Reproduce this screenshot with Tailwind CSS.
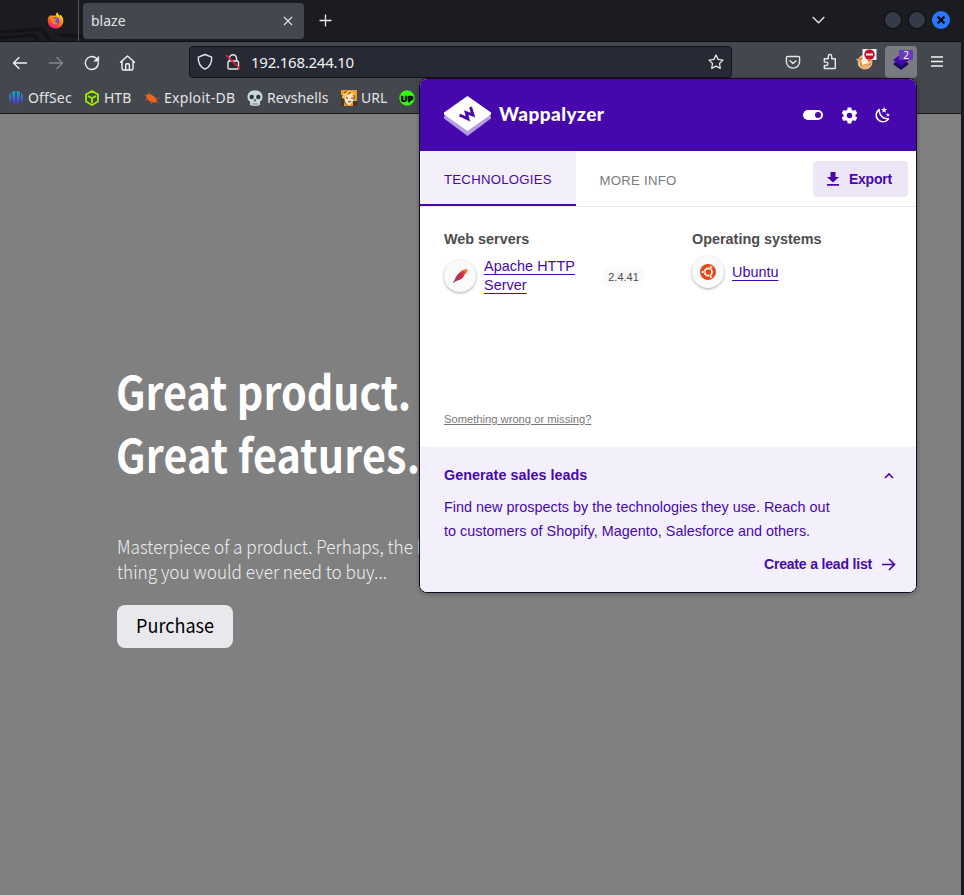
<!DOCTYPE html>
<html lang="en"><head><meta charset="utf-8"><title>blaze</title>
<script src="https://cdn.jsdelivr.net/npm/@tailwindcss/browser@4"></script></head>
<body class="relative flex h-[895px] w-[964px] overflow-hidden bg-[#17191f] font-['Noto_Sans',sans-serif]">
<div class="flex w-[961px] shrink-0 flex-col">
 <header class="relative flex h-[42px] shrink-0 items-center border-b border-[#0c0d10] bg-[#1b1c21] text-[#e3e4e6]">
  <svg class="absolute left-0 top-0" width="120" height="41" fill="none" stroke="#121317" stroke-width="3"><path d="M0 32 42 29l8 12M0 38l34-3 5 6M60 35l50 3"/></svg>
  <div class="relative flex h-full w-[79px] items-center justify-end border-r border-[#55565b] pr-[14px]">
   <svg width="17" height="17" viewBox="0 0 17 17"><defs><linearGradient id="fx" x1=".8" y1="0" x2=".3" y2="1"><stop offset="0" stop-color="#fff14a"/><stop offset=".4" stop-color="#ff980e"/><stop offset=".8" stop-color="#ff3647"/><stop offset="1" stop-color="#e31587"/></linearGradient></defs><path d="M.7 8.5C.7 6.6 1.6 4.7 2.5 3.4l.4 1.2L4 2.5l.7 1.6c1.4-.8 3.3-.6 4.3-.4C8.800 2 9.500.8 10.600.2c.1 1.600 1.200 2.500 2.400 3.600.3-.3.3-.8.3-1.200 2.400 2 3.300 4.300 3 7.100-.4 4-3.600 6.900-7.700 6.900C4 16.600.7 13.100.7 8.500z" fill="url(#fx)"/><circle cx="8.7" cy="9" r="3.7" fill="#7246d8"/><path d="M4.200 7c1.100-1.200 3-1 4.200 0 .8.100 1.500.2 1.800.5-.3.8-2 .9-2.400 1.600-.1 1.300 1.900 1.800 3 .8-.3 2-2.800 3-4.700 1.800C4.300 10.700 3.700 8.600 4.200 7z" fill="#ff8428"/></svg>
  </div>
  <div class="relative ml-1 flex h-9 w-[221px] items-center justify-between rounded bg-[#45474e] pl-2 pr-[11px] text-[14px]"><span>blaze</span>
   <svg width="10" height="10" fill="none" stroke="#e3e4e6" stroke-width="1.1"><path d="m1 1 8 8M9 1 1 9"/></svg></div>
  <svg class="ml-[15px]" width="13" height="13" fill="none" stroke="#eee" stroke-width="1.3"><path d="M6.500.5v12M.5 6.500h12"/></svg>
  <svg class="ml-[480px] -mt-px" width="13" height="8" fill="none" stroke="#e3e4e6" stroke-width="1.4"><path d="m.7 1 5.800 5.800L12.300 1"/></svg>
  <div class="ml-[59px] flex gap-[6px] -mt-px">
   <i class="size-[18px] rounded-full border border-[#0b0c0f] bg-[#353b46]"></i><i class="size-[18px] rounded-full border border-[#0b0c0f] bg-[#353b46]"></i>
   <svg width="18" height="18" viewBox="0 0 18 18"><circle cx="9" cy="9" r="9" fill="#2777ff"/><path d="m5.600 5.600 6.800 6.800m0-6.800-6.800 6.800" stroke="#0c1018" stroke-width="2.2"/></svg>
  </div>
 </header>
 <div class="flex h-[41px] shrink-0 items-center bg-[#45474e] text-[#f2f2f4]">
  <svg class="ml-3" width="125" height="20" viewBox="0 0 125 20" fill="none" stroke="#f2f2f4" stroke-width="1.4" stroke-linecap="round" stroke-linejoin="round"><path d="M1.500 10h13M7 4.500 1.500 10 7 15.500"/><path stroke="#85868b" d="M37.500 10h13M45 4.500l5.500 5.500-5.500 5.500"/><path d="M86.300 9.500a6.500 6.500 0 1 1-2-4.200l1.500 1.500"/><path d="M86.800 3.500V8.300H82z" fill="#f2f2f4" stroke-width=".5"/><path d="m108.500 9.300 7-6.300 7 6.300M110 8.200v7.300c0 .9.500 1.500 1.500 1.500h8c1 0 1.500-.6 1.500-1.500V8.200M113.700 16.800V12c0-.8.500-1.200 1.200-1.200h1.300c.7 0 1.200.4 1.200 1.200v4.800"/></svg>
  <div class="ml-[52px] flex h-8 w-[543px] shrink-0 -translate-y-px items-center rounded border border-[#121318] bg-[#272934]">
   <svg class="ml-[7px]" width="44" height="18" viewBox="0 0 44 18" fill="none" stroke="#e7e7e9" stroke-width="1.4"><path d="m8 1.500 6.700 2.700c.2 5.300-1.500 9.500-6.700 12C2.800 13.700 1.100 9.500 1.300 4.200z" stroke-linejoin="round"/><path d="M32.500 8V5.200a3.500 3.500 0 0 1 7 0V8"/><rect x="31" y="8" width="10.500" height="8" rx="1.300"/><path d="m29 2 14 14" stroke="#e8193f" stroke-width="1.600"/></svg>
   <span class="ml-[10px] pt-[2px] text-[15px] tracking-[-.25px]">192.168.244.10</span>
   <svg class="ml-auto mr-[7px]" width="16" height="16" viewBox="0 0 16 16" fill="none" stroke="#e7e7e9" stroke-width="1.300" stroke-linejoin="round"><path d="m8 1 2.100 4.400 4.900.7-3.500 3.400.8 4.900L8 12.100l-4.300 2.300.8-4.900L1 6.100l4.900-.7z"/></svg>
  </div>
  <svg class="ml-[53px] shrink-0 -translate-y-px" width="16" height="16" viewBox="0 0 16 16" fill="none" stroke="#e7e7e9" stroke-width="1.400" stroke-linecap="round" stroke-linejoin="round"><path d="M2.700 2.500h10.600c.8 0 1.300.5 1.300 1.300V7.500a6.600 6.600 0 0 1-13.200 0V3.800c0-.8.500-1.300 1.300-1.300zM5 6.700l3 2.900 3-2.900"/></svg>
  <svg class="ml-[21px] shrink-0 -translate-y-px" width="16" height="17" viewBox="0 0 16 17" fill="none" stroke="#e7e7e9" stroke-width="1.400" stroke-linejoin="round"><path d="M2.300 5.800h4V3.200a1.700 1.700 0 0 1 3.400 0v2.600h3.600V15.500H2.300v-3h2a1.700 1.700 0 0 0 0-3.400h-2z"/></svg>
  <svg class="ml-[16px] mb-[5px] shrink-0" width="23" height="22" viewBox="0 0 23 22"><circle cx="11" cy="13" r="7.500" fill="#edb27c"/><path d="M3 11c5-3 11-3 15-1l-2 6-8 2z" fill="#e97818"/><path d="m7 11 6-1 2 4-7 2z" fill="#fff0d5"/><path d="M2.500 10 6 12l-1 5M8 17l5-1 4-4" fill="none" stroke="#c8d1cc" stroke-width="1.200"/><rect x="8.500" width="14" height="11" fill="#fff"/><circle cx="15.500" cy="5.500" r="5.200" fill="#c40f2b"/><path d="M12 4.500h7v2h-7z" fill="#fff"/></svg>
  <div class="ml-[8px] grid h-8 w-8 shrink-0 -translate-y-px place-items-center rounded bg-[#7a7b80]"><svg width="32" height="32" viewBox="0 0 32 32"><path d="m8 18 8-6 8 6-8 6z" fill="#190a5c"/><path d="m8 14 8-6 8 6-8 6z" fill="#4608ad"/><rect x="14" y="4" width="14" height="10" rx="1" fill="#6938bb"/><text x="21" y="12.500" fill="#fff" font-size="10" text-anchor="middle">2</text></svg></div>
  <svg class="ml-[14px] -translate-y-px" width="12" height="11" stroke="#f2f2f4" stroke-width="1.300"><path d="M0 1h12M0 5.500h12M0 10h12"/></svg>
 </div>
 <nav class="flex h-[31px] shrink-0 items-center border-b border-[#17181b] bg-[#45474e] pb-px text-[14px] whitespace-nowrap text-[#e3e4e6]">
  <div class="flex w-[76px] items-center gap-1 pl-2 tracking-[.15px]"><svg width="16" height="16" viewBox="0 0 16 16"><defs><linearGradient id="of" x2="0" y2="1"><stop stop-color="#0cb5be"/><stop offset="1" stop-color="#6320ed"/></linearGradient></defs><path d="M3.500 2.300C0 5 .3 10 3 13V2.300zM4.200 1.700 7.300 1v14l-1-.3C5 12 4.200 9 4.200 6zM11.800 1.700 8.700 1v14l1-.3C11 12 11.800 9 11.800 6zM12.500 2.300C16 5 15.700 10 13 13V2.300z" fill="url(#of)"/></svg>OffSec</div>
  <div class="flex w-[60px] items-center gap-1 pl-2"><svg width="16" height="16" viewBox="0 0 16 16" fill="none" stroke="#9fef00" stroke-width="1.800" stroke-linejoin="round"><path d="m8 1 6 3.500v7L8 15l-6-3.500v-7zM4 6l4 2.300L12 6M8 8.300V13"/></svg>HTB</div>
  <div class="flex w-[103px] items-center gap-1 pl-2 tracking-[.3px]"><svg width="16" height="16" viewBox="0 0 16 16"><path d="M2.500 4.500c4-.8 7.500 1 9.500 4l1 3.500C9 13 5.500 12 4 9.500 2.300 8.500 2 6.500 2.500 4.500z" fill="#ef651f"/><path d="m5 2 1.500 3M.5 5 4 6M1 10l4-1M7 14l1.500-3M15.500 8l-4 1M12 11l3 2.500" fill="none" stroke="#c95a22" stroke-width=".8"/></svg>Exploit-DB</div>
  <div class="flex w-[94px] items-center gap-1 pl-2 tracking-[.1px]"><svg width="16" height="16" viewBox="0 0 16 16"><path d="M8 .300c5 0 7.500 3 7.500 6.700 0 2-.8 3.700-2.500 4.500V15c-3 1.200-7 1.200-10 0v-3.500C1.300 10.700.500 9 .500 7 .500 3.300 3 .300 8 .300z" fill="#cad6de"/><circle cx="4.700" cy="7" r="2.200" fill="#2a3740"/><circle cx="11.300" cy="7" r="2.200" fill="#2a3740"/><path d="m8 9-1 2h2zM6 13v2m2-2v2m2-2v2" fill="#2a3740" stroke="#5c6a72" stroke-width=".8"/></svg>Revshells</div>
  <div class="flex w-[58px] items-center gap-1 pl-2"><svg width="16" height="16" viewBox="0 0 16 16"><path d="M0 0h16v16H0z" fill="#f49a22"/><path d="M0 5h3v11H0zM12 11h4v5h-4z" fill="#4a342a"/><path d="M3 4c3-4 8-4 10 0v6l-4 5H6L3 10z" fill="#f8e3c8"/><path d="M1 8C1 0 12-1 14 4l-1 4-2-4-5 1-3 5z" fill="#ffc45a"/><path d="M5 8h2m3 0h2M7 12l3-.5M2.500 8l1 4 3 3.500M3 3l3-2M7 4l3-2M13 5v5" fill="none" stroke="#5c3823"/></svg>URL</div>
  <svg class="ml-2" width="16" height="16" viewBox="0 0 16 16"><circle cx="8" cy="8" r="7.300" fill="#35ff0a" stroke="#35ff0a" stroke-dasharray="2 1"/><text x="8" y="11.500" text-anchor="middle" font-size="9.500" font-weight="900" fill="#050505" stroke="#050505" stroke-width=".5">UP</text></svg>
 </nav>
 <main class="flex-1 bg-[#808080] pl-[117px] pt-[245px] font-['Noto_Sans_CJK_SC',sans-serif] text-white">
  <h1 class="-ml-px w-max origin-left scale-x-[.897] whitespace-nowrap text-[46px] leading-[63px] font-bold">Great product.<br><span class="tracking-[.2px]">Great features.</span></h1>
  <p class="mt-[48px] w-max origin-left scale-x-[.905] whitespace-nowrap text-[19px] leading-[25px] font-light text-[#eee]">Masterpiece of a product. Perhaps, the best<br>thing you would ever need to buy...</p>
  <button class="mt-[22px] flex h-[43px] w-[116px] items-center justify-center rounded-[8px] bg-[#e9e9ed] pb-[2px] text-[19px] text-black"><span class="scale-x-[.95]">Purchase</span></button>
 </main>
</div>
<section class="absolute left-[419px] top-[78px] flex h-[515px] w-[498px] flex-col overflow-hidden rounded-[8px] border border-[#110823] bg-white font-['Liberation_Sans',sans-serif] shadow-[0_1px_5px_#0004]">
 <header class="flex h-[72px] shrink-0 items-center bg-[#4608ad] pl-6 text-white">
  <svg width="47" height="42" viewBox="0 0 47 42"><path d="M0 22.500 23.500 5 47 22.500v2L23.500 42 0 24.500z" fill="#b59cde"/><path d="M0 18.500 23.500 2 47 18.500v2L23.500 37 0 20.500z" fill="#fff"/><path d="m15.500 21 8.500 3.800-1.800-6.300 6.800 2.500-2.500-8" fill="none" stroke="#4608ad" stroke-width="2.900"/></svg>
  <span class="ml-2 pb-px font-['Lato',sans-serif] text-[19px] font-black tracking-[.45px]">Wappalyzer</span>
  <svg class="ml-auto" width="20" height="10"><rect width="20" height="10" rx="5" fill="#fff"/><circle cx="15" cy="5" r="3" fill="#4608ad"/></svg>
  <svg class="ml-[17px]" width="19" height="19" viewBox="0 0 24 24" fill="#fff"><path d="M12 15.500A3.500 3.500 0 0 1 8.500 12 3.500 3.500 0 0 1 12 8.500a3.500 3.500 0 0 1 3.500 3.500 3.500 3.500 0 0 1-3.500 3.500m7.430-2.530c.04-.32.070-.64.070-.97s-.03-.66-.07-1l2.110-1.630c.19-.15.240-.42.120-.64l-2-3.460c-.12-.22-.39-.31-.61-.22l-2.490 1c-.52-.39-1.060-.73-1.690-.98l-.37-2.650A.506.506 0 0 0 14 2h-4c-.25 0-.46.180-.5.420l-.37 2.650c-.63.250-1.170.590-1.690.980l-2.490-1c-.22-.09-.49 0-.61.220l-2 3.460c-.13.220-.07.490.120.640L4.570 11c-.04.340-.07.670-.07 1s.03.650.070.970l-2.110 1.660c-.19.150-.25.420-.12.640l2 3.460c.12.220.39.300.61.220l2.490-1.010c.52.400 1.060.740 1.690.990l.37 2.650c.04.240.250.420.5.420h4c.25 0 .46-.18.500-.42l.37-2.650c.63-.26 1.170-.59 1.690-.99l2.490 1.010c.22.080.49 0 .61-.22l2-3.460c.12-.22.070-.49-.12-.64z"/></svg>
  <svg class="ml-[15px] mr-[24px]" width="18" height="18" viewBox="0 0 24 24" fill="#fff"><path d="m17.750 4.090-2.530 1.940.91 3.060-2.630-1.810-2.630 1.810.91-3.060-2.530-1.940L12.440 4l1.060-3 1.060 3zm3.500 6.910-1.640 1.250.590 1.980-1.700-1.170-1.700 1.170.590-1.980L15.750 11l2.060-.05.690-1.950.690 1.950zm-2.280 4.950c.83-.08 1.720 1.100 1.190 1.850-.32.450-.66.870-1.080 1.270C15.170 23 8.840 23 4.940 19.070c-3.910-3.900-3.910-10.240 0-14.140.4-.4.820-.76 1.270-1.080.75-.53 1.930.360 1.850 1.190-.27 2.860.690 5.830 2.890 8.020 2.190 2.200 5.160 3.160 8.020 2.890m-1.640 2.020a12.080 12.080 0 0 1-7.800-3.470c-2.170-2.190-3.330-5-3.490-7.820-2.810 3.140-2.700 7.960.310 10.980 3.020 3.010 7.840 3.120 10.980.310"/></svg>
 </header>
 <div class="flex h-14 shrink-0 border-b border-[#e7e7e7] text-[13.200px] tracking-[.25px]">
  <div class="flex w-[156px] items-center border-b-2 border-[#4608ad] bg-[#f4f0fb] pl-6 pt-[4px] text-[#4608ad]">TECHNOLOGIES</div>
  <div class="flex items-center pl-[23.500px] pt-[4px] text-[#7b7b7b]">MORE INFO</div>
  <div class="ml-auto mt-[10px] mr-2 flex h-9 w-[95px] items-center gap-[10px] rounded bg-[#ede6f7] pl-[14px] text-[14px] font-bold tracking-[-.25px] text-[#4608ad]"><svg width="12" height="14" fill="#4608ad"><path d="M3.500 0h5v5H12l-6 5.500L0 5h3.500zM0 12h12v1.700H0z"/></svg>Export</div>
 </div>
 <div class="flex h-[240px] shrink-0 flex-col justify-between px-6 pt-6 pb-5 text-[#4c4c4c]">
  <div class="flex">
  <div class="w-[248px]"><h2 class="h-4 text-[14.400px] leading-4 font-bold">Web servers</h2>
   <div class="mt-[10px] flex"><div class="mt-[3px] grid size-8 place-items-center rounded-full bg-[#fafafa] shadow-[0_1px_3px_#0005]"><svg width="16" height="16" viewBox="0 0 16 16"><defs><linearGradient id="fe" x1="1" y1="0" x2="0" y2="1"><stop stop-color="#f79a23"/><stop offset=".4" stop-color="#d32d3a"/><stop offset="1" stop-color="#793f96"/></linearGradient></defs><path d="M15.500 1C10 1 5 6 3 11l-2 4 3-2c5-1 7-3 9-7 2-1 3-4 2.500-5z" fill="url(#fe)"/><path d="M1 15 12 4" stroke="#bd2244" stroke-width=".6"/></svg></div>
   <a class="ml-2 w-[105px] text-[14.400px] leading-[19px] tracking-[.05px] text-[#4608ad] underline underline-offset-[3px]">Apache HTTP Server</a><span class="ml-[14px] mt-[10px] grid h-5 w-[41px] place-items-center rounded bg-[#fafafa] text-[11px]">2.4.41</span></div></div>
  <div><h2 class="h-4 text-[14.400px] leading-4 font-bold">Operating systems</h2>
   <div class="mt-[9px] flex items-center gap-2"><div class="grid size-8 place-items-center rounded-full bg-[#fafafa] shadow-[0_1px_3px_#0005]"><svg width="16" height="16" viewBox="0 0 16 16"><circle cx="8" cy="8" r="8" fill="#df4a16"/><circle cx="8.300" cy="8" r="3.700" fill="none" stroke="#fff" stroke-width="1.700"/><g fill="#fff" stroke="#df4a16" stroke-width=".7"><circle cx="2.800" cy="8" r="1.600"/><circle cx="10.900" cy="3.300" r="1.600"/><circle cx="10.900" cy="12.700" r="1.600"/></g></svg></div><a class="text-[14.400px] leading-[19px] text-[#4608ad] underline underline-offset-[3px]">Ubuntu</a></div></div>
  </div>
  <a class="text-[11.200px] leading-4 text-[#777] underline">Something wrong or missing?</a>
 </div>
 <div class="flex-1 bg-[#f4f0fb] pl-6 pr-5 pt-[18px] text-[14.400px] text-[#4608ad]">
  <div class="flex h-5 items-center justify-between font-bold"><span class="pt-[2px]">Generate sales leads</span><svg class="mr-[2px]" width="10" height="7" fill="none" stroke="#4608ad" stroke-width="1.600"><path d="m1 6 4-4 4 4"/></svg></div>
  <p class="mt-[10px] whitespace-nowrap leading-6 tracking-[.015px]">Find new prospects by the technologies they use. Reach out<br>to customers of Shopify, Magento, Salesforce and others.</p>
  <div class="mt-[11px] flex items-center justify-end gap-[10px] text-[14px] leading-5 font-bold tracking-[-.18px]">Create a lead list<svg width="14" height="13" fill="none" stroke="#4608ad" stroke-width="1.700"><path d="M0 6.500h12.500M7 1l5.500 5.500L7 12"/></svg></div>
 </div>
</section>
</body></html>
